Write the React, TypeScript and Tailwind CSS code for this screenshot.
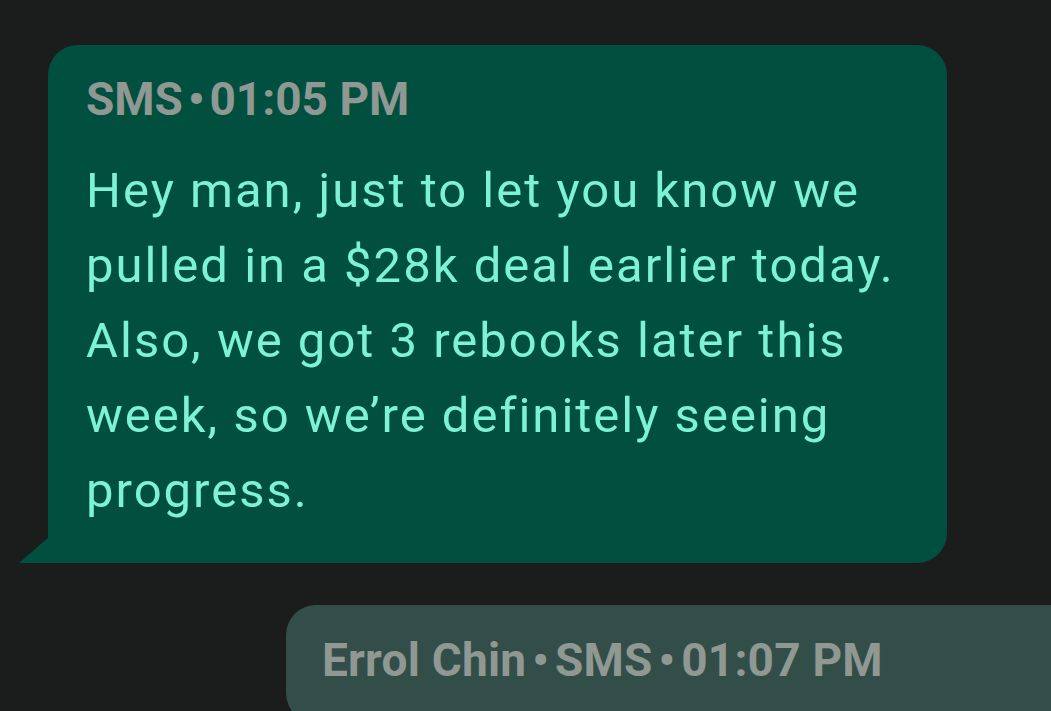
import React from "react";

export default function App() {
  return (
    <div
      className="w-[1051px] h-[711px] overflow-hidden bg-[#1b1c1c] pt-[45px]"
      style={{ fontFamily: "Roboto, 'Noto Sans', sans-serif" }}
    >
      <div className="relative ml-[48px] w-[899px] rounded-[30px] rounded-bl-none bg-[#01503f] pl-[38px] pr-[30px] pt-[31px] pb-[35px]">
        <div className="text-[46px] leading-[46px] font-bold text-[#8f9893]">
          SMS<span className="mx-[5px]">•</span>01:05 PM
        </div>
        <div className="mt-[31px] text-[49px] leading-[75px] tracking-[2px] text-[#7df2d7]">
          Hey man, just to let you know we pulled in a $28k deal earlier today. Also, we got 3 rebooks later this week, so we’re definitely seeing progress.
        </div>
        <div className="absolute left-[-29px] bottom-0 h-[26px] w-[30px] bg-[#01503f] [clip-path:polygon(100%_0,100%_100%,0_100%)]" />
      </div>
      <div className="ml-[286px] mt-[42px] w-[800px] rounded-[30px] bg-[#334e48] pl-[36px] pt-[32px] pb-[40px]">
        <div className="text-[46px] leading-[46px] font-bold tracking-[0.2px] text-[#8f9893]">
          Errol Chin<span className="mx-[6px]">•</span>SMS<span className="mx-[6px]">•</span>01:07 PM
        </div>
      </div>
    </div>
  );
}
